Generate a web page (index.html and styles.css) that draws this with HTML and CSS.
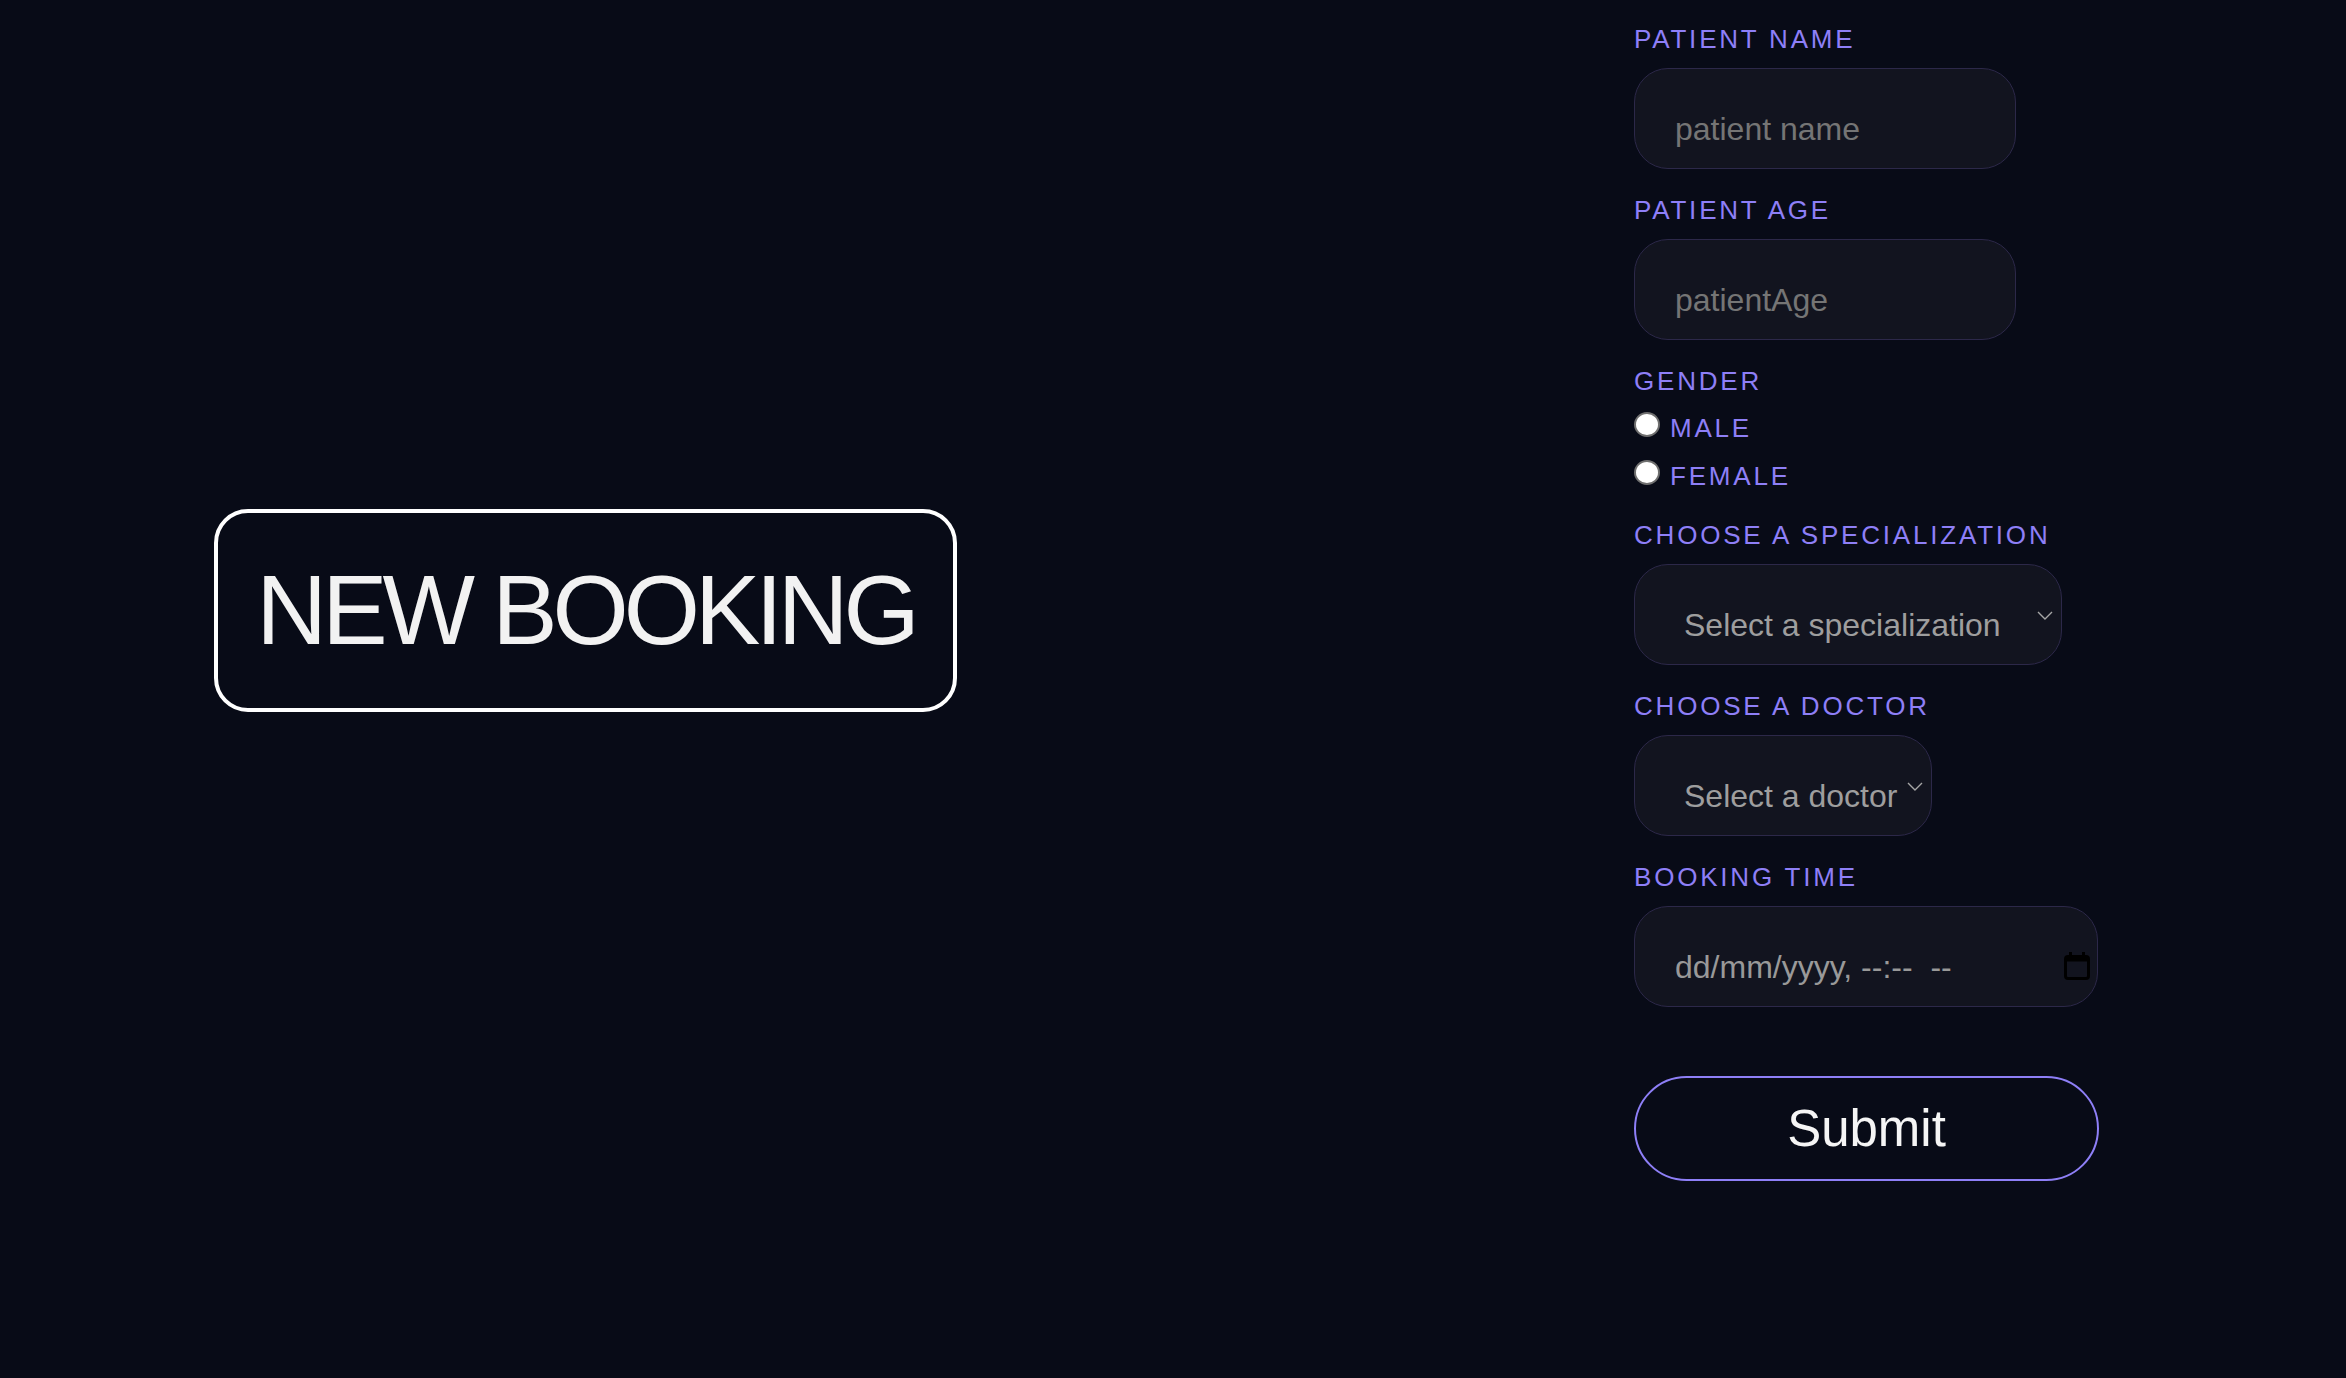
FILE: index.html
```html
<!DOCTYPE html>
<html lang="en">
<head>
<meta charset="utf-8">
<title>New Booking</title>
<link rel="stylesheet" href="styles.css">
</head>
<body>
<main class="page">
  <section class="hero">
    <div class="hero-box"><h1 class="hero-title">NEW BOOKING</h1></div>
  </section>

  <form class="booking">
    <div class="group">
      <label class="label" for="pname">Patient Name</label>
      <input id="pname" class="field field-name" type="text" placeholder="patient name">
    </div>

    <div class="group">
      <label class="label" for="page">Patient Age</label>
      <input id="page" class="field field-age" type="text" placeholder="patientAge">
    </div>

    <div class="group">
      <span class="label">Gender</span>
      <label class="radio-row"><input class="radio" type="radio" name="gender"><span class="radio-text">Male</span></label>
      <label class="radio-row radio-row-last"><input class="radio" type="radio" name="gender"><span class="radio-text">Female</span></label>
    </div>

    <div class="group">
      <label class="label" for="spec">Choose a specialization</label>
      <div class="select-wrap">
        <select id="spec" class="field select select-spec">
          <option>Select a specialization</option>
        </select>
        <svg class="chevron" width="16" height="9" viewBox="0 0 16 9"><polyline points="1,1 8,8 15,1" fill="none" stroke="#a6a6a6" stroke-width="1.4"/></svg>
      </div>
    </div>

    <div class="group">
      <label class="label" for="doc">Choose a doctor</label>
      <div class="select-wrap">
        <select id="doc" class="field select select-doc">
          <option>Select a doctor</option>
        </select>
        <svg class="chevron" width="16" height="9" viewBox="0 0 16 9"><polyline points="1,1 8,8 15,1" fill="none" stroke="#a6a6a6" stroke-width="1.4"/></svg>
      </div>
    </div>

    <div class="group">
      <label class="label" for="btime">Booking Time</label>
      <div class="date-wrap">
        <input id="btime" class="field field-date" type="text" placeholder="dd/mm/yyyy, --:--&#160; --">
        <svg class="cal" width="26" height="28" viewBox="0 0 26 28">
          <rect x="5" y="0" width="3" height="6" fill="#000"/>
          <rect x="18" y="0" width="3" height="6" fill="#000"/>
          <rect x="1.5" y="4.5" width="23" height="22" rx="2.5" fill="none" stroke="#000" stroke-width="3"/>
          <rect x="1.5" y="4.5" width="23" height="5" fill="#000"/>
        </svg>
      </div>
    </div>

    <button class="submit" type="button">Submit</button>
  </form>
</main>
</body>
</html>
```

FILE: styles.css
```css
* { box-sizing: border-box; }

html, body {
  margin: 0;
  background: #080b17;
}

body {
  font-family: "Liberation Sans", Arial, Helvetica, sans-serif;
  color: #f2f2f2;
  min-height: 1378px;
}

.page {
  display: flex;
  align-items: center;
  padding-left: 214px;
  gap: 677px;
}

.hero-box {
  width: 743px;
  height: 203px;
  border: 4px solid #ffffff;
  border-radius: 34px;
  display: flex;
  align-items: center;
  justify-content: center;
}

.hero-title {
  margin: 0;
  font-size: 98px;
  font-weight: 400;
  line-height: 1;
  letter-spacing: -5px;
  color: #f2f2f2;
  white-space: nowrap;
}

.booking {
  display: flex;
  flex-direction: column;
  align-items: flex-start;
  padding: 24px 0 39px;
}

.group {
  display: flex;
  flex-direction: column;
  align-items: flex-start;
}

.group + .group { margin-top: 26px; }

.label {
  font-size: 26px;
  line-height: 30px;
  letter-spacing: 2.8px;
  text-transform: uppercase;
  color: #8e7ff7;
  margin-bottom: 14px;
}

.field {
  height: 101px;
  background: #12141f;
  border: 1px solid #2c2849;
  border-radius: 34px;
  font-family: "Liberation Sans", Arial, Helvetica, sans-serif;
  font-size: 32px;
  line-height: 37px;
  padding: 42px 20px 20px 40px;
  color: #9c9c9c;
  outline: none;
  margin: 0;
}

.field::placeholder { color: #757575; }

.field-name, .field-age { width: 382px; }

.select-wrap, .date-wrap { position: relative; }

.select {
  -webkit-appearance: none;
  appearance: none;
  padding-left: 49px;
  color: #9e9e9e;
}

.select-spec { width: 428px; }
.select-doc { width: 298px; }

.chevron {
  position: absolute;
  right: 9px;
  top: 47px;
  pointer-events: none;
}

.field-date { width: 464px; }
.field-date::placeholder { color: #999999; }

.cal {
  position: absolute;
  right: 8px;
  top: 46px;
  pointer-events: none;
}

.radio-row {
  display: flex;
  align-items: center;
  height: 36px;
  margin-bottom: 12px;
}

.radio-row-last { margin-bottom: 0; }

.radio {
  -webkit-appearance: none;
  appearance: none;
  width: 26px;
  height: 25px;
  margin: 0 10px 8px 0;
  border-radius: 50%;
  background: #ffffff;
  border: 2px solid #6f6f6f;
}

.radio-text {
  font-size: 26px;
  line-height: 36px;
  letter-spacing: 2.8px;
  text-transform: uppercase;
  color: #8e7ff7;
}

.submit {
  margin-top: 69px;
  width: 465px;
  height: 105px;
  background: transparent;
  border: 2px solid #8e7ff7;
  border-radius: 53px;
  color: #f5f5f5;
  font-family: "Liberation Sans", Arial, Helvetica, sans-serif;
  font-size: 51px;
  padding: 0;
}
```
